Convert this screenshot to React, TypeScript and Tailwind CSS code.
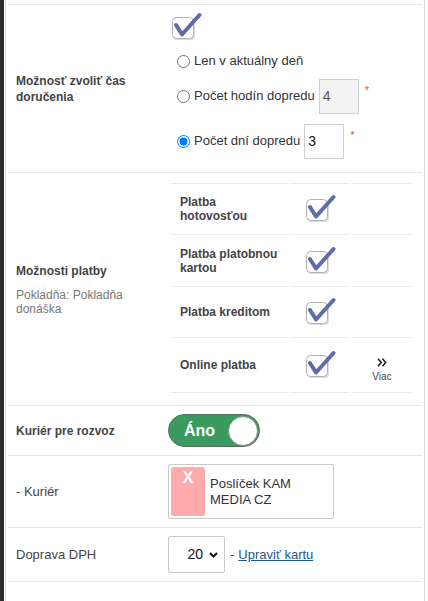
import React from "react";

function Check({ className = "" }: { className?: string }) {
  return (
    <svg width="32" height="29" viewBox="0 0 32 29" className={className}>
      <rect x="3" y="7" width="22" height="21" rx="4" fill="#cfcfcf" opacity="0.7" />
      <rect x="2.5" y="5.5" width="21" height="21" rx="4" fill="#fff" stroke="#aeb0b4" strokeWidth="1" />
      <path d="M6 13 L12 22.5 L29.5 3" fill="none" stroke="#5d6ea6" strokeWidth="4" strokeLinecap="round" strokeLinejoin="round" />
    </svg>
  );
}

function Radio({ checked = false }: { checked?: boolean }) {
  return (
    <input
      type="radio"
      name="cas"
      defaultChecked={checked}
      className="w-[13px] h-[13px] ml-[9px] mr-[4px] m-0 accent-[#0075ff]"
    />
  );
}

export default function App() {
  return (
    <div
      className="w-[428px] h-[601px] bg-white flex overflow-hidden text-[#444]"
      style={{ fontFamily: '"Liberation Sans", Arial, sans-serif' }}
    >
      <div className="w-[4px] h-full bg-[#2d2d31]" />
      <div className="w-[420px] ml-[1px] h-full border-x border-[#d9d9d9] px-[2px] pt-[4px]">
        {/* Row 1 */}
        <div className="grid grid-cols-[160px_1fr] border-t border-[#e6e6e6] h-[168px]">
          <div className="pl-[8px] flex items-center text-[12px] font-bold leading-[16px]">
            Možnosť zvoliť čas
            <br />
            doručenia
          </div>
          <div className="flex flex-col">
            <div className="mt-[7px] ml-[2px] h-[29px]">
              <Check />
            </div>
            <div className="mt-[10px] h-[20px] flex items-center text-[13px] text-[#333]">
              <Radio />
              <span>Len v aktuálny deň</span>
            </div>
            <div className="mt-[8px] h-[34px] flex items-center text-[13px] text-[#333]">
              <Radio />
              <span>Počet hodín dopredu</span>
              <div className="ml-[4px] w-[40px] h-[35px] border border-[#cfcfcf] bg-[#f3f3f3] flex items-center pl-[3px] text-[14px] text-[#555]">
                4
              </div>
              <span className="self-start ml-[6px] mt-[3px] text-[11px] text-[#d9534f]">*</span>
            </div>
            <div className="mt-[11px] h-[34px] flex items-center text-[13px] text-[#333]">
              <Radio checked />
              <span>Počet dní dopredu</span>
              <div className="ml-[4px] w-[40px] h-[35px] border border-[#cfcfcf] bg-white flex items-center pl-[3px] text-[14px] text-[#111]">
                3
              </div>
              <span className="self-start ml-[6px] mt-[3px] text-[11px] text-[#d9534f]">*</span>
            </div>
          </div>
        </div>

        {/* Row 2 */}
        <div className="grid grid-cols-[160px_1fr] border-t border-[#e6e6e6] h-[233px]">
          <div className="pl-[8px] flex flex-col justify-center">
            <div className="text-[12px] font-bold leading-[16px]">Možnosti platby</div>
            <div className="mt-[9px] text-[12px] leading-[14px] text-[#777]">
              Pokladňa: Pokladňa
              <br />
              donáška
            </div>
          </div>
          <div className="pl-[2px] pt-[10px]">
            <div className="grid grid-cols-[119px_59px_60px] gap-x-[2px] w-[242px]">
              {[
                { t: ["Platba", "hotovosťou"], h: "h-[51px]" },
                { t: ["Platba platobnou", "kartou"], h: "h-[52px]" },
                { t: ["Platba kreditom"], h: "h-[51px]" },
                { t: ["Online platba"], h: "h-[56px]", more: true, last: true },
              ].map((r, i) => (
                <React.Fragment key={i}>
                  <div
                    className={`${r.h} border-t border-[#ececec] ${r.last ? "border-b" : ""} pl-[10px] flex items-center text-[12px] font-bold leading-[14px]`}
                  >
                    <div>
                      {r.t.map((l, j) => (
                        <div key={j}>{l}</div>
                      ))}
                    </div>
                  </div>
                  <div
                    className={`${r.h} border-t border-[#ececec] ${r.last ? "border-b" : ""} flex items-center pl-[13px]`}
                  >
                    <Check className="mb-[1px]" />
                  </div>
                  <div
                    className={`${r.h} border-t border-[#ececec] ${r.last ? "border-b" : ""} flex flex-col items-center justify-center`}
                  >
                    {r.more && (
                      <div className="flex flex-col items-center mt-[10px]">
                        <svg width="10" height="9" viewBox="0 0 10 9">
                          <path d="M1 0.8 L4.2 4.5 L1 8.2 M5.5 0.8 L8.7 4.5 L5.5 8.2" fill="none" stroke="#222" strokeWidth="1.6" />
                        </svg>
                        <span className="text-[10px] leading-[12px] mt-[4px] text-[#444]">Viac</span>
                      </div>
                    )}
                  </div>
                </React.Fragment>
              ))}
            </div>
          </div>
        </div>

        {/* Row 3 */}
        <div className="grid grid-cols-[160px_1fr] border-t border-[#e6e6e6] h-[50px]">
          <div className="pl-[8px] flex items-center text-[12px] font-bold">Kuriér pre rozvoz</div>
          <div className="flex items-center">
            <div className="w-[92px] h-[33px] rounded-full bg-[#3b9b5e] border border-[#4f6f58] flex items-center justify-between pl-[15px] pr-[1px]">
              <span className="text-white font-bold text-[16px]">Áno</span>
              <div className="w-[30px] h-[30px] rounded-full bg-white border border-[#8a8a8a]" />
            </div>
          </div>
        </div>

        {/* Row 4 */}
        <div className="grid grid-cols-[160px_1fr] border-t border-[#e6e6e6] h-[72px]">
          <div className="pl-[8px] flex items-center text-[13px]">- Kuriér</div>
          <div className="flex items-center">
            <div className="w-[166px] h-[55px] border border-[#c9c9c9] rounded-[2px] p-[2px] flex">
              <div className="w-[34px] h-full bg-[#ffabab] rounded-[3px] flex justify-center pt-[1px] text-white font-bold text-[16px] leading-[20px]">
                X
              </div>
              <div className="ml-[5px] flex items-center text-[13px] leading-[16px] text-[#333]">
                <div>
                  Poslíček KAM
                  <br />
                  MEDIA CZ
                </div>
              </div>
            </div>
          </div>
        </div>

        {/* Row 5 */}
        <div className="grid grid-cols-[160px_1fr] border-t border-b border-[#e6e6e6] h-[55px]">
          <div className="pl-[8px] flex items-center text-[13px]">Doprava DPH</div>
          <div className="flex items-center text-[13px]">
            <div className="w-[57px] h-[37px] border border-[#c9c9c9] rounded-[2px] flex items-center justify-end pr-[6px] text-[#111]">
              <span className="text-[14px]">20</span>
              <svg width="9" height="6" viewBox="0 0 9 6" className="ml-[6px]">
                <path d="M1 1 L4.5 4.5 L8 1" fill="none" stroke="#111" strokeWidth="2" />
              </svg>
            </div>
            <span className="ml-[5px] text-[#444]">-</span>
            <a className="ml-[4px] text-[#1c5a8b] underline">Upraviť kartu</a>
          </div>
        </div>
      </div>
    </div>
  );
}
